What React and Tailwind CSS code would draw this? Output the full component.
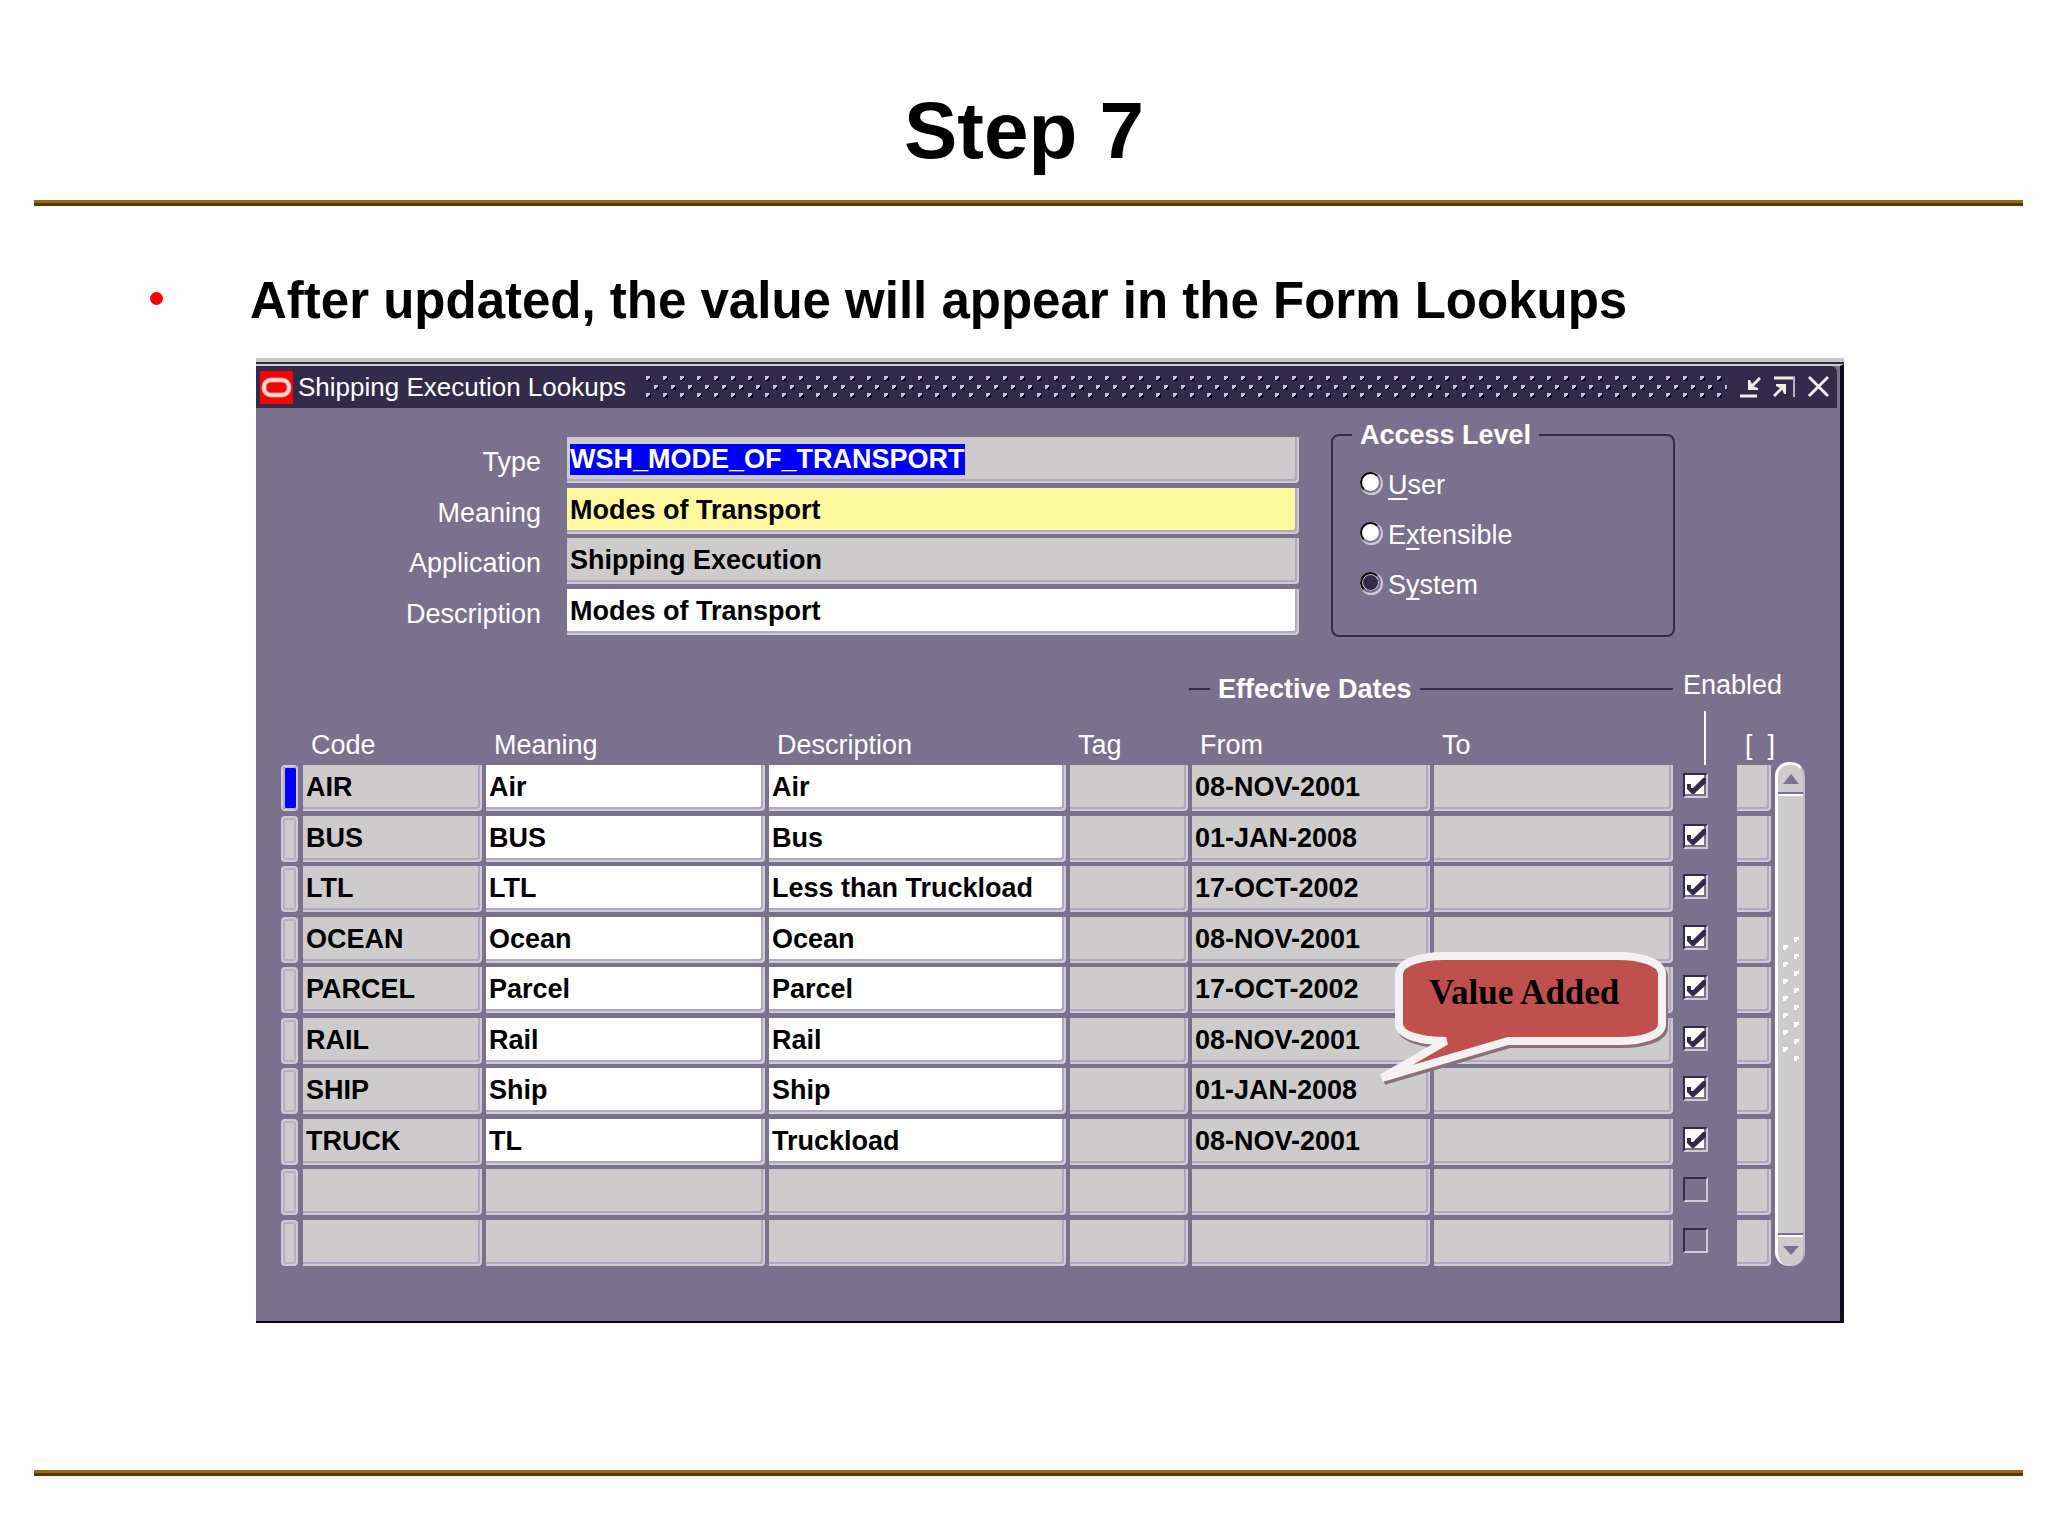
import React, { useEffect, useRef } from "react";

const fields = [
  { id: "type", label: "Type", value: "WSH_MODE_OF_TRANSPORT", bg: "bg-[#cecbcd]" },
  { id: "meaning", label: "Meaning", value: "Modes of Transport", bg: "bg-[#fef99e]" },
  { id: "application", label: "Application", value: "Shipping Execution", bg: "bg-[#cecbcd]" },
  { id: "description", label: "Description", value: "Modes of Transport", bg: "bg-white" },
];

const accessLevels = [
  { id: "user", before: "", key: "U", after: "ser" },
  { id: "extensible", before: "E", key: "x", after: "tensible" },
  { id: "system", before: "S", key: "y", after: "stem" },
];

const lookups = [
  { code: "AIR", meaning: "Air", description: "Air", from: "08-NOV-2001" },
  { code: "BUS", meaning: "BUS", description: "Bus", from: "01-JAN-2008" },
  { code: "LTL", meaning: "LTL", description: "Less than Truckload", from: "17-OCT-2002" },
  { code: "OCEAN", meaning: "Ocean", description: "Ocean", from: "08-NOV-2001" },
  { code: "PARCEL", meaning: "Parcel", description: "Parcel", from: "17-OCT-2002" },
  { code: "RAIL", meaning: "Rail", description: "Rail", from: "08-NOV-2001" },
  { code: "SHIP", meaning: "Ship", description: "Ship", from: "01-JAN-2008" },
  { code: "TRUCK", meaning: "TL", description: "Truckload", from: "08-NOV-2001" },
  null,
  null,
];

const fieldClass =
  "block w-full h-[46px] pl-[3px] pr-1 rounded-br-[4px] border-r-2 border-b-2 border-[#cfcbd6] shadow-[inset_-2px_-2px_0_#aea9bd] font-bold text-[27px] text-black outline-none";

const Rule = () => (
  <div className="ml-[34px] mr-[25px] h-[6px] bg-[#593800] border-t-3 border-[#966a10]"></div>
);

const Cell = ({ value = "", label, white }) => (
  <td className="p-0 pr-1 align-top">
    <input
      type="text"
      aria-label={label}
      defaultValue={value}
      className={`${fieldClass} ${white ? "bg-white" : "bg-[#cecbcd]"}`}
    />
  </td>
);

const EnabledBox = ({ row }) => (
  <div className="grid ml-[6px] mt-2 size-[25px]">
    <input
      type="checkbox"
      aria-label="Enabled"
      defaultChecked={!!row}
      className={`appearance-none [grid-area:1/1] size-[25px] border-2 border-t-[#332b4b] border-l-[#332b4b] border-r-[#cfcbd6] border-b-[#cfcbd6] ${
        row ? "bg-white shadow-[inset_-2px_-2px_0_#7a718f]" : "bg-transparent"
      }`}
    />
    {row && (
      <svg viewBox="0 0 25 25" className="[grid-area:1/1] size-[25px] pointer-events-none">
        <path d="M4 11h4v4h2L20 5h3v5L13 19l-2 2H9l-3-3-2-2z" fill="#332b4b" />
      </svg>
    )}
  </div>
);

const TitleBar = () => (
  <div className="flex items-center h-[42px] mr-[3px] pl-1 pr-2 rounded-tr-[6px] bg-[#332b4b]">
    <svg viewBox="0 0 33 33" className="size-[33px] shrink-0">
      <rect width="33" height="33" fill="#fe0000" />
      <rect x="4" y="9" width="25" height="15" rx="7" fill="none" stroke="#ff8f80" strokeWidth="5" />
      <rect x="4" y="9" width="25" height="15" rx="7" fill="none" stroke="#ffe3dc" strokeWidth="3" />
    </svg>
    <h2 className="ml-[5px] text-[26px] leading-8 text-white whitespace-nowrap">
      Shipping Execution Lookups
    </h2>
    <svg className="flex-1 min-w-0 h-[24px] ml-[19px] mr-[12px]">
      <defs>
        <pattern id="grip" width="17" height="24" patternUnits="userSpaceOnUse">
          <path d="M2 2h4v4h-4zM2 19h4v4h-4zM10 11h4v4h-4z" fill="#05031a" />
          <path d="M1 1h4v2h-1v1h-1v1h-2zM1 18h4v2h-1v1h-1v1h-2zM9 10h4v2h-1v1h-1v1h-2z" fill="#c9c4d6" />
        </pattern>
      </defs>
      <rect width="100%" height="24" fill="url(#grip)" />
    </svg>
    <div className="flex gap-3 text-[#f2f0ee]">
      <button type="button" aria-label="Minimize">
        <svg viewBox="0 0 22 24" className="block w-[22px] h-6" fill="none" stroke="currentColor" strokeWidth="3">
          <path d="M21 3L11 13M1 21h17" />
          <path d="M9 5v10h10v-2l-5-2-3-6z" fill="currentColor" stroke="none" />
        </svg>
      </button>
      <button type="button" aria-label="Maximize">
        <svg viewBox="0 0 22 24" className="block w-[22px] h-6" fill="none" stroke="currentColor" strokeWidth="3">
          <path d="M1 3h21M1 21L11 11" />
          <path d="M3 9h10v10h-2l-2-5-6-3z" fill="currentColor" stroke="none" />
          <path d="M21 2v20" strokeWidth="2" stroke="#b9b4c4" />
        </svg>
      </button>
      <button type="button" aria-label="Close">
        <svg viewBox="0 0 22 24" className="block w-[22px] h-6" fill="none" stroke="currentColor" strokeWidth="3">
          <path d="M2 2l19 19M21 2L2 21" />
        </svg>
      </button>
    </div>
  </div>
);

const ScrollBar = () => (
  <div className="flex flex-col w-[30px] h-[504px] mb-1 shrink-0 self-end rounded-[14px] overflow-hidden bg-[#cecbcd] border-l-3 border-t-3 border-white border-r-2 border-r-[#bdb9c6]">
    <button type="button" aria-label="Scroll up" className="flex justify-center items-center h-[29px] border-b-2 border-[#7a718f]">
      <svg viewBox="0 0 16 10" className="w-4 h-[10px]">
        <path d="M8 0l8 10H0z" fill="#7a718f" />
      </svg>
    </button>
    <div className="flex-1 flex justify-center items-center pb-8 border-t-2 border-white">
      <svg viewBox="0 0 18 124" className="w-[18px] h-[124px]">
        {[0, 17, 34, 51, 68, 85, 102, 119].map((y) => (
          <path key={y} d={`M12 ${y}h5v3h-2v2h-3z`} fill="#fff" />
        ))}
        {[8, 25, 42, 59, 76, 93, 110].map((y) => (
          <path key={y} d={`M1 ${y}h5v3h-2v2h-3z`} fill="#fff" />
        ))}
      </svg>
    </div>
    <button type="button" aria-label="Scroll down" className="flex justify-center items-center h-[33px] border-t-2 border-[#7a718f] shadow-[inset_0_2px_0_#fff]">
      <svg viewBox="0 0 16 9" className="w-4 h-[9px]">
        <path d="M8 9l8-9H0z" fill="#7a718f" />
      </svg>
    </button>
  </div>
);

const calloutPath =
  "M21 26C21 14 44 8 66 8H240C262 8 284 14 284 26V76C284 88 262 93 242 93H130L4 130L68 93C42 93 21 87 21 76Z";

const Callout = () => (
  <div className="absolute right-[174px] top-[590px] w-[292px] h-[140px]">
    <svg viewBox="0 0 292 140" className="absolute inset-0 w-[292px] h-[140px]">
      <path d={calloutPath} transform="translate(2 3)" fill="#8d6f79" stroke="#8d6f79" strokeWidth="8" strokeLinejoin="bevel" />
      <path d={calloutPath} fill="#c0504d" stroke="#f4f1f2" strokeWidth="8" strokeLinejoin="bevel" />
    </svg>
    <p className="relative pt-[25px] pl-[51px] font-['Liberation_Serif',serif] font-bold text-[35px] leading-10 text-black whitespace-nowrap">
      Value Added
    </p>
  </div>
);

const App = () => {
  const typeRef = useRef(null);

  useEffect(() => {
    typeRef.current.focus();
    typeRef.current.select();
  }, []);

  return (
    <main className="min-h-screen bg-[#fefefe] pb-[60px] font-['Liberation_Sans',Arial,sans-serif] text-black">
      <h1 className="pt-[85px] mb-[23px] text-center font-bold text-[80px] leading-[92px]">
        Step 7
      </h1>
      <Rule />

      <ul className="mt-[65px] pl-[150px]">
        <li className="flex items-center font-bold text-[51px] leading-[60px]">
          <span className="size-[13px] mr-[87px] mt-[-6px] rounded-full bg-[#fe0000]"></span>
          After updated, the value will appear in the Form Lookups
        </li>
      </ul>

      <section className="relative mt-[27px] mb-[147px] ml-[256px] mr-[204px] text-[27px] text-white">
        <div className="h-[6px] border-t-4 border-[#c9c7c9] bg-[#332b4b]"></div>
        <div className="border-t-2 border-t-[#cfcbd6] border-r-4 border-r-[#120e1e] border-b-2 border-b-[#08060c] bg-[#7a718f]">
          <TitleBar />

          <div className="pt-3 pb-[51px]">
            <div className="flex items-start mr-[165px]">
              <div className="flex-1 mt-[17px] mr-8">
                {fields.map((f, i) => (
                  <div key={f.id} className="grid grid-cols-[285px_1fr] gap-x-[26px] h-[51px] even:h-[50px]">
                    <label htmlFor={f.id} className="text-right leading-[50px]">
                      {f.label}
                    </label>
                    <input
                      id={f.id}
                      ref={i === 0 ? typeRef : null}
                      type="text"
                      defaultValue={f.value}
                      className={`${fieldClass} ${f.bg} selection:bg-[#0000fe] selection:text-white`}
                    />
                  </div>
                ))}
              </div>

              <fieldset className="w-[344px] h-[217px] pl-[19px] border-2 border-[#332b4b] rounded-lg">
                <legend className="px-2 font-bold leading-[30px]">Access Level</legend>
                <div className="pt-[10px] pl-2">
                  {accessLevels.map((a) => (
                    <label key={a.id} className="flex items-center gap-[7px] leading-[50px]">
                      <input
                        type="radio"
                        name="access"
                        defaultChecked={a.id === "system"}
                        className="appearance-none size-[21px] mb-[6px] rounded-full bg-white border-2 border-t-black border-l-black border-r-[#7a718f] border-b-[#7a718f] shadow-[1px_1px_0_1px_#cfcbd6] checked:bg-[#332b4b] checked:shadow-[1px_1px_0_1px_#cfcbd6,inset_0_0_0_1px_#cfcbd6]"
                      />
                      <span>
                        {a.before}
                        <span className="underline decoration-2 underline-offset-4 [text-decoration-skip-ink:none]">{a.key}</span>
                        {a.after}
                      </span>
                    </label>
                  ))}
                </div>
              </fieldset>
            </div>

            <div className="flex mt-[26px] ml-[25px] mr-[35px]">
              <table className="flex-1 w-full table-fixed border-collapse">
                <colgroup>
                  <col className="w-[22px]" />
                  <col className="w-[183px]" />
                  <col className="w-[283px]" />
                  <col />
                  <col className="w-[122px]" />
                  <col className="w-[242px]" />
                  <col className="w-[243px]" />
                  <col className="w-[60px]" />
                  <col className="w-[38px]" />
                </colgroup>
                <thead className="text-left whitespace-nowrap">
                  <tr className="h-[46px]">
                    <td colSpan={5} className="p-0"></td>
                    <th colSpan={2} className="p-0 pr-1 pb-[2px] align-bottom font-bold">
                      <div className="flex items-center gap-2 -ml-[3px] leading-10">
                        <span className="w-[21px] h-[2px] bg-[#332b4b]"></span>
                        Effective Dates
                        <span className="flex-1 h-[2px] bg-[#332b4b]"></span>
                      </div>
                    </th>
                    <th colSpan={2} className="p-0 pl-[6px] align-top font-normal leading-10">
                      Enabled
                    </th>
                  </tr>
                  <tr className="h-[54px] align-bottom leading-10">
                    <td className="p-0"></td>
                    <th className="p-0 pl-2 font-normal">Code</th>
                    <th className="p-0 pl-2 font-normal">Meaning</th>
                    <th className="p-0 pl-2 font-normal">Description</th>
                    <th className="p-0 pl-2 font-normal">Tag</th>
                    <th className="p-0 pl-2 font-normal">From</th>
                    <th className="p-0 pl-2 font-normal">To</th>
                    <td className="p-0">
                      <div className="ml-[27px] w-[2px] h-[54px] bg-white"></div>
                    </td>
                    <th className="p-0 pl-2 font-normal">[&nbsp; ]</th>
                  </tr>
                </thead>
                <tbody>
                  {lookups.map((row, i) => (
                    <tr key={i} className="h-[51px] even:h-[50px]">
                      <td className="p-0 align-top">
                        <div
                          className={`w-[17px] h-[46px] rounded-[4px] border-2 border-[#cfcbd6] ${
                            i === 0
                              ? "bg-[#0000fe] shadow-[inset_1px_0_0_1px_#b5b0c2]"
                              : "bg-[#cecbcd] shadow-[inset_0_0_0_2px_#b5b0c2]"
                          }`}
                        ></div>
                      </td>
                      <Cell label="Code" value={row?.code} />
                      <Cell label="Meaning" value={row?.meaning} white={row} />
                      <Cell label="Description" value={row?.description} white={row} />
                      <Cell label="Tag" />
                      <Cell label="From" value={row?.from} />
                      <Cell label="To" />
                      <td className="p-0 align-top">
                        <EnabledBox row={row} />
                      </td>
                      <Cell label="Flexfield" />
                    </tr>
                  ))}
                </tbody>
              </table>
              <ScrollBar />
            </div>
          </div>
        </div>
        <Callout />
      </section>

      <Rule />
    </main>
  );
};

export default App;
